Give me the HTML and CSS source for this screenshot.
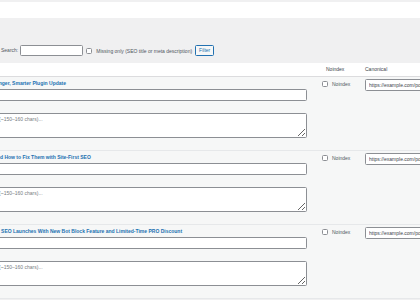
FILE: index.html
```html
<!DOCTYPE html>
<html lang="en">
<head>
<meta charset="utf-8">
<title>SEO Bulk Editor</title>
<link rel="stylesheet" href="styles.css">
</head>
<body>
<div class="topstrip"></div>
<div class="notice"></div>
<form class="toolbar">
  <label class="search-label" for="s">Search:</label>
  <input class="search-input" id="s" type="text">
  <label class="missing">
    <input class="cb" type="checkbox">
    <span>Missing only (SEO title or meta description)</span>
  </label>
  <button class="btn" type="button">Filter</button>
</form>
<div class="table-wrap">
  <table class="list">
    <colgroup>
      <col class="c-title">
      <col class="c-noindex">
      <col class="c-canon">
    </colgroup>
    <thead>
      <tr>
        <th></th>
        <th class="h-noindex">Noindex</th>
        <th>Canonical</th>
      </tr>
    </thead>
    <tbody>
      <tr>
        <td class="t-cell">
          <a class="title-link" href="#">Release 2: A Stronger, Smarter Plugin Update</a>
          <input class="field" type="text">
          <textarea class="desc" placeholder="Meta description (~150–160 chars)..."></textarea>
        </td>
        <td class="n-cell"><label class="noindex"><input class="cb cb-lg" type="checkbox"><span>Noindex</span></label></td>
        <td class="c-cell"><input class="field canon" type="text" value="https://example.com/post-one/"></td>
      </tr>
      <tr>
        <td class="t-cell">
          <a class="title-link" href="#">Crawler Errors and How to Fix Them with Site-First SEO</a>
          <input class="field" type="text">
          <textarea class="desc" placeholder="Meta description (~150–160 chars)..."></textarea>
        </td>
        <td class="n-cell"><label class="noindex"><input class="cb cb-lg" type="checkbox"><span>Noindex</span></label></td>
        <td class="c-cell"><input class="field canon" type="text" value="https://example.com/post-two/"></td>
      </tr>
      <tr>
        <td class="t-cell">
          <a class="title-link" href="#">Update: Site-First SEO Launches With New Bot Block Feature and Limited-Time PRO Discount</a>
          <input class="field" type="text">
          <textarea class="desc" placeholder="Meta description (~150–160 chars)..."></textarea>
        </td>
        <td class="n-cell"><label class="noindex"><input class="cb cb-lg" type="checkbox"><span>Noindex</span></label></td>
        <td class="c-cell"><input class="field canon" type="text" value="https://example.com/post-three/"></td>
      </tr>
    </tbody>
  </table>
</div>
</body>
</html>
```
FILE: styles.css
```css
* { box-sizing: border-box; }

html, body {
  margin: 0;
  padding: 0;
  background: #f0f0f1;
  font-family: "Liberation Sans", Arial, sans-serif;
  font-size: 5px;
  color: #2c3338;
  overflow: hidden;
}

.topstrip {
  height: 2px;
  background: #f0f0f1;
}

.notice {
  height: 16px;
  background: #ffffff;
}

.toolbar {
  height: 45px;
  padding: 27px 0 0 1px;
  display: flex;
  align-items: flex-start;
  background: #f0f0f1;
  margin: 0;
}

.search-label {
  line-height: 11px;
  margin-right: 2px;
  color: #50575e;
}

.search-input {
  width: 63px;
  height: 11px;
  margin: 0;
  padding: 0 2px;
  border: 1px solid #8c8f94;
  border-radius: 1.5px;
  background: #fff;
  font: inherit;
}

.missing {
  display: flex;
  align-items: center;
  height: 11px;
  margin-left: 3px;
  color: #50575e;
}

.missing span { margin-left: 4px; }

.cb {
  appearance: none;
  -webkit-appearance: none;
  width: 6px;
  height: 6px;
  margin: 0;
  border: 1px solid #8c8f94;
  border-radius: 1.5px;
  background: #fff;
  flex: none;
}

.btn {
  height: 11px;
  margin-left: 3px;
  padding: 0 3px;
  border: 1px solid #2271b1;
  border-radius: 1.5px;
  background: #f6f7f7;
  color: #2271b1;
  font: inherit;
  line-height: 9px;
}

.table-wrap {
  overflow: hidden;
  background: #f0f0f1;
}

.list {
  margin-left: -46px;
  width: 620px;
  border-collapse: collapse;
  table-layout: fixed;
}

.c-title { width: 364px; }
.c-noindex { width: 43px; }
.c-canon { width: 213px; }

.list th {
  height: 13px;
  padding: 0 4px;
  text-align: left;
  font-weight: normal;
  color: #3c434a;
  background: #fff;
  border-bottom: 1px solid #dcdcde;
  vertical-align: middle;
}

.list th.h-noindex { padding-left: 8px; }

.list td {
  background: #f6f7f7;
  vertical-align: top;
  padding: 3px 4px 12px 4px;
  border-bottom: 1px solid #e6e8ea;
}

.t-cell { padding-right: 11px !important; }

.title-link {
  display: block;
  height: 7px;
  line-height: 7px;
  font-weight: bold;
  color: #2271b1;
  text-decoration: none;
  white-space: nowrap;
  overflow: hidden;
}

.field {
  display: block;
  width: 100%;
  height: 12px;
  margin: 2px 0 0 0;
  padding: 0 3px;
  border: 1px solid #8c8f94;
  border-radius: 1.5px;
  background: #fff;
  font: inherit;
  color: #3c434a;
}

.desc {
  display: block;
  width: 100%;
  height: 25px;
  margin: 12px 0 0 0;
  padding: 2px 2px;
  border: 1px solid #8c8f94;
  border-radius: 1.5px;
  background: #fff;
  font: inherit;
  line-height: 7px;
  resize: vertical;
}

.desc::placeholder { color: #787c82; }

.noindex {
  display: flex;
  align-items: center;
  height: 8px;
  color: #50575e;
}

.noindex span { margin-left: 4px; }

.c-cell { padding-top: 2px !important; }

.canon {
  margin-top: 0;
  padding: 0 3px;
}
```
